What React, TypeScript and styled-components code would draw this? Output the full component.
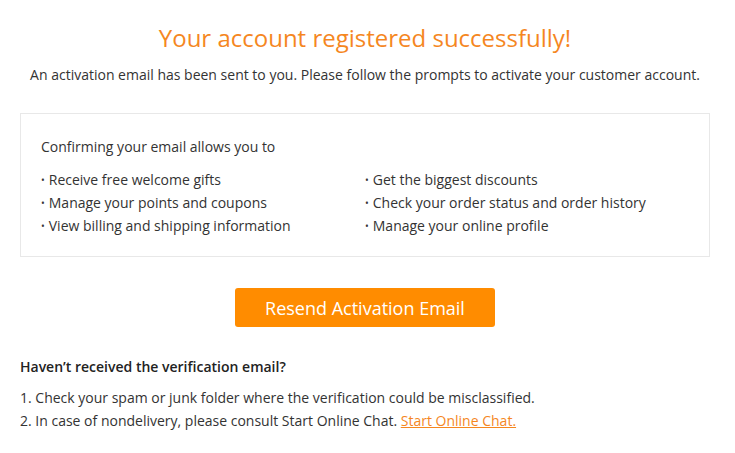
import React from "react";
import styled, { createGlobalStyle } from "styled-components";

const Global = createGlobalStyle`
  html, body { margin: 0; padding: 0; background: #fff; }
  body { font-family: "Open Sans", "Liberation Sans", sans-serif; color: #333; }
`;

const Page = styled.div`
  width: 690px;
  margin-left: 20px;
  padding-top: 18px;
  display: flex;
  flex-direction: column;
`;

const Title = styled.h1`
  margin: 0;
  text-align: center;
  font-size: 24px;
  font-weight: 400;
  line-height: 40px;
  color: #f5871f;
`;

const Subtitle = styled.p`
  margin: 7px 0 0;
  text-align: center;
  font-size: 14px;
  line-height: 20px;
  color: #333;
`;

const Box = styled.div`
  margin-top: 28px;
  border: 1px solid #e8e8e8;
  padding: 22px 20px 20px;
  height: 144px;
  box-sizing: border-box;
`;

const BoxTitle = styled.div`
  font-size: 14px;
  line-height: 22px;
  color: #333;
`;

const Grid = styled.ul`
  list-style: none;
  margin: 10px 0 0;
  padding: 0;
  display: grid;
  grid-template-columns: 1fr 1fr;
  grid-auto-flow: column;
  grid-template-rows: repeat(3, 23px);
`;

const Item = styled.li`
  font-size: 14px;
  line-height: 23px;
  color: #333;
  &::before { content: "•"; margin-right: 4px; font-size: 10px; vertical-align: 1px; }
`;

const ButtonRow = styled.div`
  display: flex;
  justify-content: center;
  margin-top: 31px;
`;

const Button = styled.button`
  width: 260px;
  height: 39px;
  border: none;
  border-radius: 3px;
  background: #ff8c00;
  color: #fff;
  font-family: inherit;
  font-size: 18px;
  cursor: pointer;
`;

const Help = styled.div`
  margin-top: 29px;
  display: flex;
  flex-direction: column;
`;

const HelpTitle = styled.div`
  font-size: 14px;
  font-weight: 600;
  line-height: 22px;
  color: #222;
`;

const HelpList = styled.div`
  margin-top: 8px;
  display: flex;
  flex-direction: column;
`;

const HelpLine = styled.div`
  font-size: 14px;
  line-height: 23px;
  color: #333;
`;

const Link = styled.a`
  color: #f5871f;
  text-decoration: underline;
`;

const left = [
  "Receive free welcome gifts",
  "Manage your points and coupons",
  "View billing and shipping information",
];
const right = [
  "Get the biggest discounts",
  "Check your order status and order history",
  "Manage your online profile",
];

export default function App() {
  return (
    <>
      <Global />
      <Page>
        <Title>Your account registered successfully!</Title>
        <Subtitle>
          An activation email has been sent to you. Please follow the prompts to activate your customer account.
        </Subtitle>
        <Box>
          <BoxTitle>Confirming your email allows you to</BoxTitle>
          <Grid>
            {[...left, ...right].map((t) => (
              <Item key={t}>{t}</Item>
            ))}
          </Grid>
        </Box>
        <ButtonRow>
          <Button>Resend Activation Email</Button>
        </ButtonRow>
        <Help>
          <HelpTitle>Haven’t received the verification email?</HelpTitle>
          <HelpList>
            <HelpLine>1. Check your spam or junk folder where the verification could be misclassified.</HelpLine>
            <HelpLine>
              2. In case of nondelivery, please consult Start Online Chat. <Link href="#">Start Online Chat.</Link>
            </HelpLine>
          </HelpList>
        </Help>
      </Page>
    </>
  );
}
